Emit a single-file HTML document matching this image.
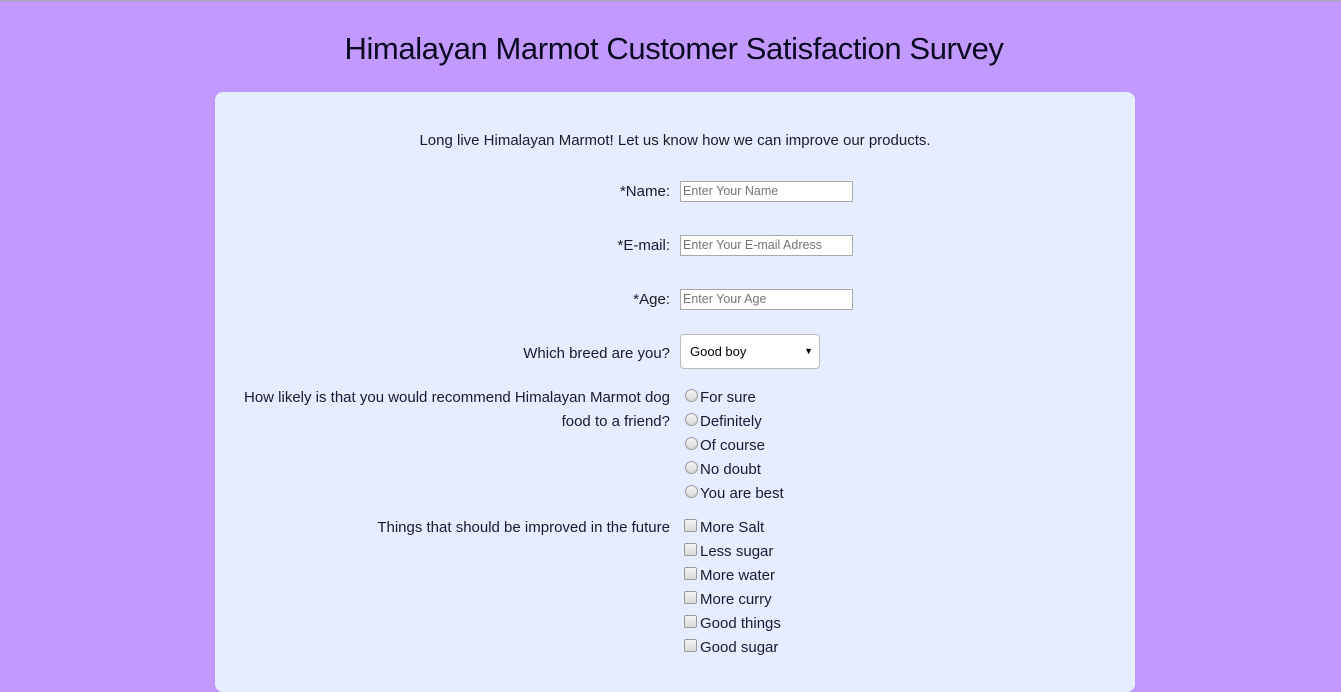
<!DOCTYPE html>
<html><head><style>
html,body{margin:0;padding:0;width:1341px;height:655px;overflow:hidden;background:#c299ff;font-family:"Liberation Sans",sans-serif;color:#1a1a2a}
body{border-top:1px solid #aaa;box-sizing:border-box}
.a{position:absolute;white-space:nowrap}
h1{position:absolute;top:31px;left:0;width:1348px;text-align:center;margin:0;font-weight:normal;font-size:31px;color:#0a0a20;letter-spacing:-0.4px}
.card{position:absolute;left:215px;top:92px;width:920px;height:600px;background:#e6edfe;border-radius:8px}
.lbl{position:absolute;right:671px;font-size:15px;text-align:right;white-space:nowrap}
.inp{position:absolute;left:680px;width:169px;height:19px;border:1px solid #a9a9a9;background:#fff;font-size:12.5px;color:#757575;line-height:19px;padding-left:2px;box-sizing:content-box}
.opt{position:absolute;left:700px;font-size:15px;white-space:nowrap}
.rad{position:absolute;left:685px;width:11px;height:11px;border-radius:50%;border:1px solid #999;background:linear-gradient(#f4f4f4,#d6d6d6)}
.chk{position:absolute;left:684px;width:11px;height:11px;border-radius:2px;border:1px solid #999;background:linear-gradient(#f4f4f4,#d9d9d9)}
</style></head><body>
<h1>Himalayan Marmot Customer Satisfaction Survey</h1>
<div class="card"></div>
<div class="a" style="left:0;width:1350px;text-align:center;top:132px;font-size:15px">Long live Himalayan Marmot! Let us know how we can improve our products.</div>
<div class="lbl" style="top:183px">*Name:</div>
<div class="inp" style="top:181px">Enter Your Name</div>
<div class="lbl" style="top:237px">*E-mail:</div>
<div class="inp" style="top:235px">Enter Your E-mail Adress</div>
<div class="lbl" style="top:291px">*Age:</div>
<div class="inp" style="top:289px">Enter Your Age</div>
<div class="lbl" style="top:345px">Which breed are you?</div>
<div class="a" style="left:680px;top:334px;width:138px;height:33px;border:1px solid #bbb;border-radius:4px;background:#fff;font-size:13px;line-height:33px;color:#000"><span style="margin-left:9px">Good boy</span><span style="position:absolute;right:6px;font-size:9px">&#9660;</span></div>
<div class="lbl" style="top:386px;line-height:24px">How likely is that you would recommend Himalayan Marmot dog<br>food to a friend?</div>
<div class="rad" style="top:389px"></div><div class="opt" style="top:389px">For sure</div>
<div class="rad" style="top:413px"></div><div class="opt" style="top:413px">Definitely</div>
<div class="rad" style="top:437px"></div><div class="opt" style="top:437px">Of course</div>
<div class="rad" style="top:461px"></div><div class="opt" style="top:461px">No doubt</div>
<div class="rad" style="top:485px"></div><div class="opt" style="top:485px">You are best</div>
<div class="lbl" style="top:519px">Things that should be improved in the future</div>
<div class="chk" style="top:519px"></div><div class="opt" style="top:519px">More Salt</div>
<div class="chk" style="top:543px"></div><div class="opt" style="top:543px">Less sugar</div>
<div class="chk" style="top:567px"></div><div class="opt" style="top:567px">More water</div>
<div class="chk" style="top:591px"></div><div class="opt" style="top:591px">More curry</div>
<div class="chk" style="top:615px"></div><div class="opt" style="top:615px">Good things</div>
<div class="chk" style="top:639px"></div><div class="opt" style="top:639px">Good sugar</div>
</body></html>
